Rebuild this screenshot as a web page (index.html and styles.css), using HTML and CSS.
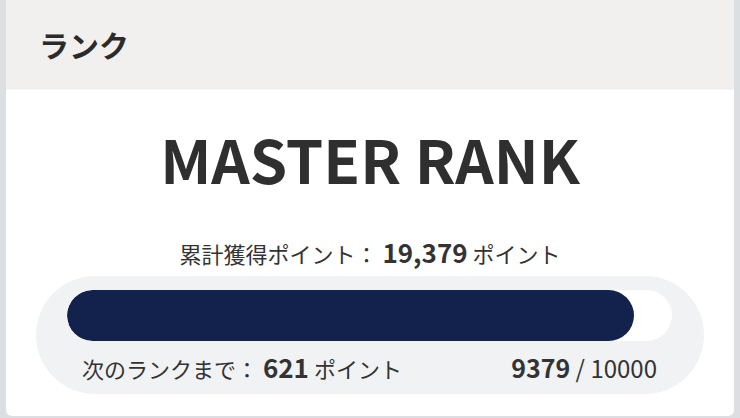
FILE: index.html
```html
<!DOCTYPE html>
<html lang="ja">
<head>
<meta charset="utf-8">
<link rel="stylesheet" href="styles.css">
</head>
<body>
<div class="card">
  <div class="card-header">ランク</div>
  <div class="card-body">
    <div class="rank-name">MASTER RANK</div>
    <div class="total">累計獲得ポイント： <span class="num">19,379</span> ポイント</div>
    <div class="progress-box">
      <div class="track"><div class="fill" style="width:93.79%"></div></div>
      <div class="progress-info">
        <div class="next">次のランクまで： <span class="num">621</span> ポイント</div>
        <div class="ratio"><span class="num">9379</span> / 10000</div>
      </div>
    </div>
  </div>
</div>
</body>
</html>
```
FILE: styles.css
```css
html, body {
  margin: 0;
  padding: 0;
}
body {
  width: 740px;
  height: 418px;
  background: #dcdfe2;
  font-family: "Noto Sans CJK JP", "Noto Sans", sans-serif;
  color: #333;
  overflow: hidden;
}
.card {
  margin: 0 6px;
  height: 416px;
  background: #fff;
  border-radius: 0 0 6px 6px;
  overflow: hidden;
}
.card-header {
  height: 90px;
  box-sizing: border-box;
  background: #f1f0ee;
  border-bottom: 1px solid #f6f6f5;
  padding-left: 33px;
  font-size: 30px;
  font-weight: 700;
  line-height: 88px;
  color: #2b2b2b;
}
.card-body {
  padding: 0 30px;
  text-align: center;
}
.rank-name {
  margin-top: 28px;
  font-size: 60px;
  font-weight: 700;
  line-height: 80px;
  color: #2f2f2f;
}
.total {
  margin-top: 39px;
  font-size: 22px;
  line-height: 32px;
  color: #333;
}
.num {
  font-weight: 700;
  font-size: 26px;
  line-height: 1;
}
.progress-box {
  margin-top: 7px;
  height: 118px;
  box-sizing: border-box;
  background: #f1f2f4;
  border-radius: 59px;
  padding: 14px 32px 0 31px;
}
.track {
  height: 51px;
  background: #fff;
  border-radius: 26px;
  overflow: hidden;
}
.fill {
  height: 100%;
  background: #13224d;
  border-radius: 26px;
}
.progress-info {
  display: flex;
  justify-content: space-between;
  align-items: baseline;
  padding: 11px 15px 0 15px;
  font-size: 22px;
  line-height: 32px;
}
.ratio {
  font-size: 24px;
  line-height: 1;
}
.ratio .num {
  font-size: 25px;
}
```
